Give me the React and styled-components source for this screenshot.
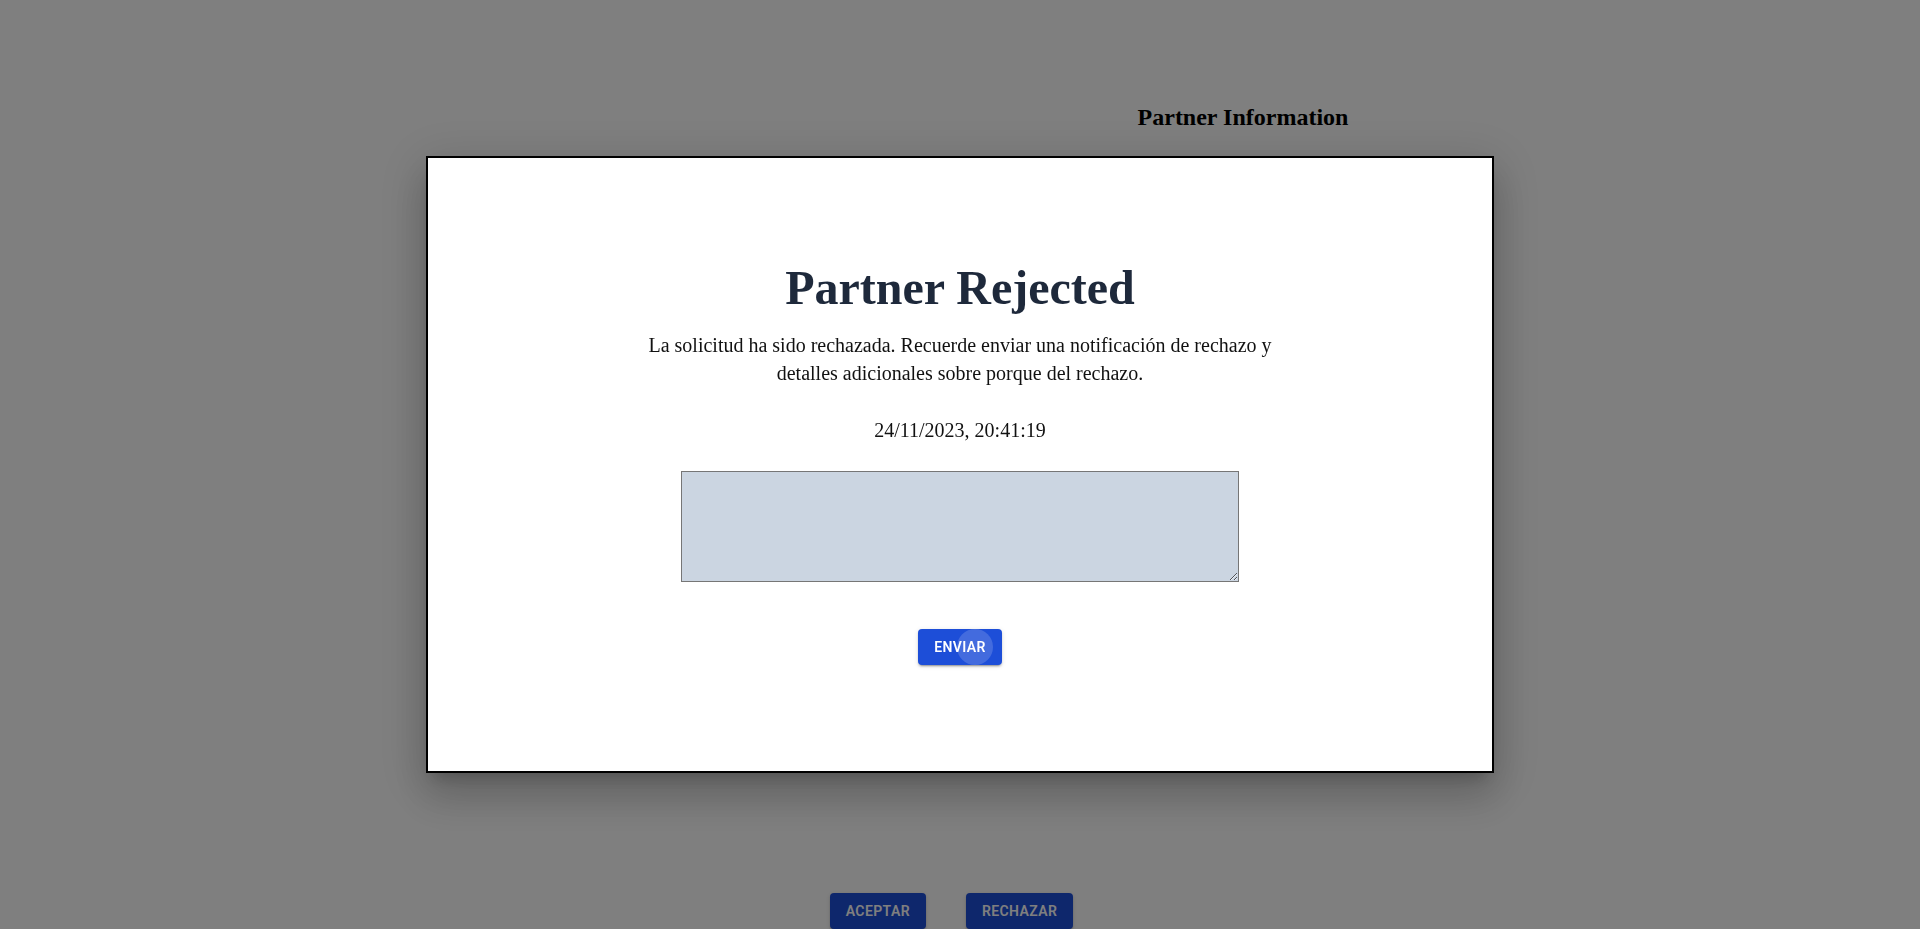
import React from 'react'
import styled, { createGlobalStyle } from 'styled-components';

const GlobalStyle = createGlobalStyle`
    html, body {
        margin: 0;
        padding: 0;
        background: #fff;
        font-family: "Liberation Serif", "Times New Roman", serif;
        overflow: hidden;
    }
`;

const Page = styled.div`
    min-height: 929px;
    display: flex;
    flex-direction: column;
`;
const Header = styled.header`
    display: grid;
    grid-template-columns: 566px 1fr;
    padding-top: 103px;
`;
const PageTitle = styled.h2`
    grid-column: 2;
    margin: 0;
    font-size: 24px;
    line-height: 28px;
    font-weight: bold;
    color: #000;
    text-align: center;
`;
const Details = styled.section`
    min-height: 762px;
`;
const ActionRow = styled.div`
    display: flex;
    justify-content: center;
    gap: 40px;
    padding-right: 17px;
`;
const Button = styled.button`
    position: relative;
    overflow: hidden;
    min-width: 64px;
    height: 36px;
    padding: 6px 16px;
    border: none;
    border-radius: 4px;
    background: #1d4ed8;
    color: #fff;
    font-family: Roboto, "Liberation Sans", sans-serif;
    font-weight: 600;
    font-size: 14px;
    line-height: 24px;
    letter-spacing: 0.4px;
    text-transform: uppercase;
    box-shadow: 0px 3px 1px -2px rgba(0,0,0,0.2), 0px 2px 2px 0px rgba(0,0,0,0.14), 0px 1px 5px 0px rgba(0,0,0,0.12);
    cursor: pointer;
`;
const Ripple = styled.span`
    position: absolute;
    top: 0;
    left: 39px;
    width: 36px;
    height: 36px;
    border-radius: 50%;
    background: rgba(255, 255, 255, 0.17);
    pointer-events: none;
`;

const Backdrop = styled.div`
    position: fixed;
    inset: 0;
    background: rgba(0, 0, 0, 0.5);
`;
const Modal = styled.div`
    position: fixed;
    top: 156px;
    left: 426px;
    width: 1068px;
    height: 617px;
    box-sizing: border-box;
    border: 2px solid #000;
    background: #fff;
    box-shadow: 0px 11px 15px -7px rgba(0,0,0,0.2), 0px 24px 38px 3px rgba(0,0,0,0.14), 0px 9px 46px 8px rgba(0,0,0,0.12);
    display: flex;
    flex-direction: column;
    align-items: center;
    justify-content: center;
    padding-bottom: 2px;
`;
const ModalTitle = styled.h1`
    margin: 2px 0 0;
    font-size: 48px;
    line-height: 48px;
    font-weight: bold;
    color: #1e293b;
`;
const Message = styled.p`
    margin: 19px 0 0;
    max-width: 672px;
    font-size: 20px;
    line-height: 28px;
    color: #111;
    text-align: center;
`;
const DateText = styled.p`
    margin: 29px 0 0;
    font-size: 20px;
    line-height: 28px;
    color: #111;
`;
const Reason = styled.textarea`
    display: block;
    margin-top: 27px;
    width: 558px;
    height: 111px;
    box-sizing: border-box;
    border: 1px solid #767676;
    background: #cbd5e1;
    padding: 2px;
    font-family: "Liberation Mono", monospace;
    font-size: 13px;
    outline: none;
`;
const SendButton = styled(Button)`
    margin-top: 47px;
`;

const App = () => {
    return (
        <>
            <GlobalStyle/>
            <Page>
                <Header>
                    <PageTitle>Partner Information</PageTitle>
                </Header>
                <Details/>
                <ActionRow>
                    <Button>Aceptar</Button>
                    <Button>Rechazar</Button>
                </ActionRow>
            </Page>
            <Backdrop/>
            <Modal role="dialog">
                <ModalTitle>Partner Rejected</ModalTitle>
                <Message>
                    La solicitud ha sido rechazada. Recuerde enviar una notificación de rechazo y detalles adicionales sobre porque del rechazo.
                </Message>
                <DateText>24/11/2023, 20:41:19</DateText>
                <Reason/>
                <SendButton>
                    Enviar
                    <Ripple/>
                </SendButton>
            </Modal>
        </>
    )
}

export default App;
